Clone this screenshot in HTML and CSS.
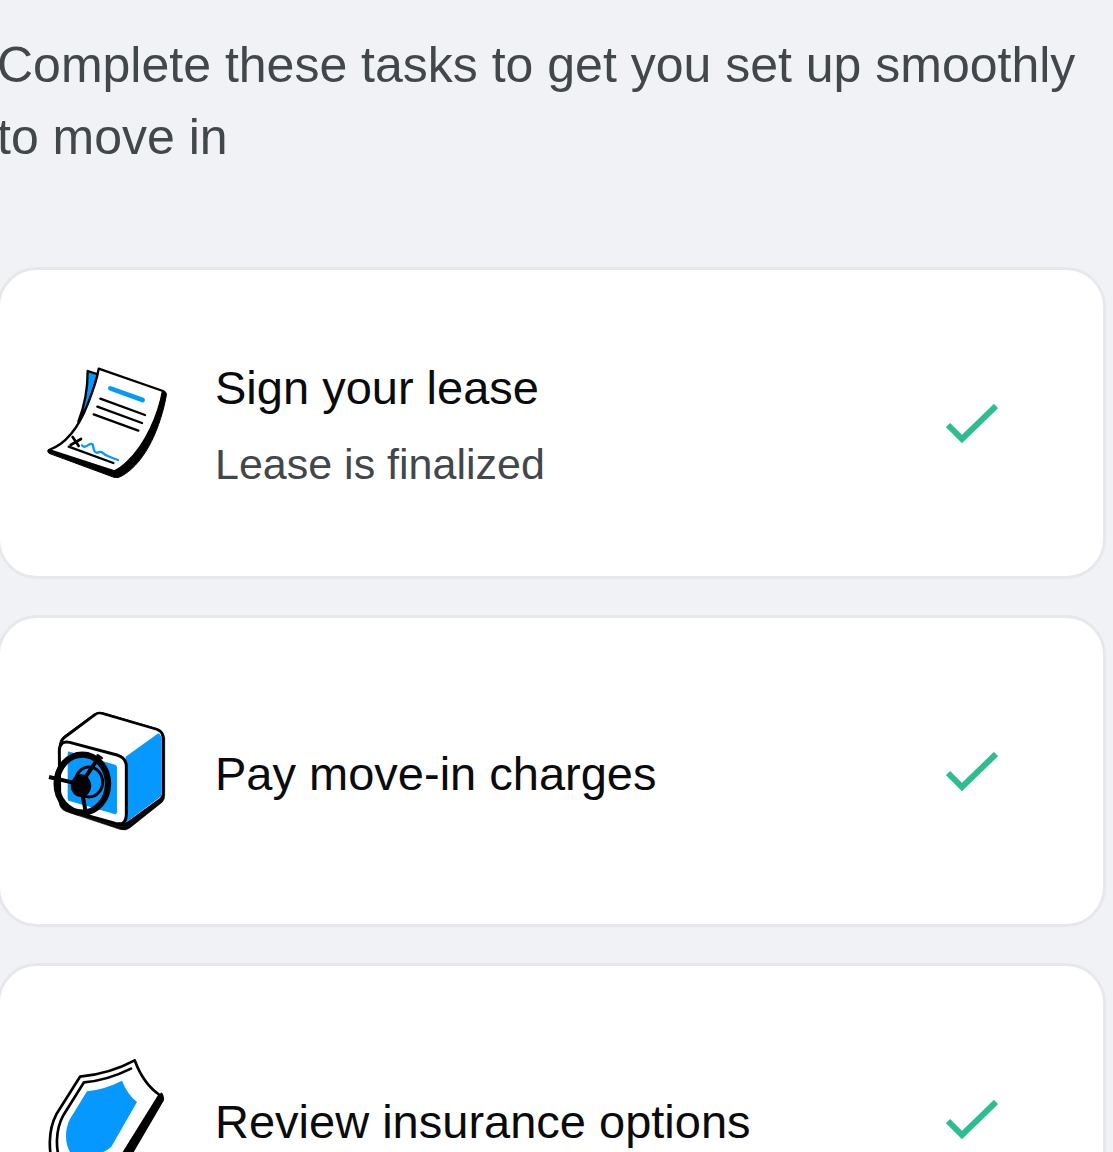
FILE: index.html
```html
<!DOCTYPE html>
<html lang="en">
<head>
<meta charset="utf-8">
<meta name="viewport" content="width=device-width, initial-scale=1">
<title>Move-in tasks</title>
<link rel="stylesheet" href="styles.css">
</head>
<body>
<main class="page">
  <p class="intro">Complete these tasks to get you set up smoothly to move in</p>
  <ul class="tasks">
    <li class="task">
      <svg class="task-icon" viewBox="36 21 360 372" aria-hidden="true" fill="none" stroke="#000" stroke-width="7" stroke-linejoin="round" stroke-linecap="round">
        <path d="M158 48L189 58L160 150L130 200Q158 130 158 48Z" fill="#0598ff"/>
        <path d="M388 108Q396 112 394 121C378 210 335 320 262 362Q248 371 237 367L42 295Q34 286 42 284L230 280Z" fill="#000" stroke-width="3"/>
        <path d="M191 41L384 108C372 175 335 268 276 322Q256 342 238 349L42 285C100 264 136 204 157 150C172 112 185 82 191 41Z" fill="#fff"/>
        <path d="M226 100L323 135" stroke="#0598ff" stroke-width="14"/>
        <path d="M196 131L330 180M187 155L321 204M176 178L310 227M101 275L235 324" stroke-width="7"/>
        <path d="M113 246L131 273M138 252L107 270" stroke-width="8"/>
        <path d="M141 271Q147 279 157 272Q171 262 174 271C176 280 175 291 184 293C193 294 193 287 201 292Q212 302 225 306L249 315" stroke="#0598ff" stroke-width="7"/>
      </svg>
      <div class="task-text">
        <h2 class="task-title">Sign your lease</h2>
        <p class="task-note">Lease is finalized</p>
      </div>
      <svg class="check" viewBox="0 0 52 40" role="img" aria-label="Complete"><path d="M2 21L16 35L50 2"/></svg>
    </li>
    <li class="task">
      <svg class="task-icon" viewBox="36 30 360 372" aria-hidden="true" fill="none" stroke="#000" stroke-width="8" stroke-linejoin="round" stroke-linecap="round">
        <path d="M73 150V310Q75 326 92 334L255 388Q272 393 284 384L382 306Q389 299 389 285V115Q386 93 369 87L205 38Q190 34 177 42L86 109Q71 121 73 150Z" fill="#000" stroke-width="2"/>
        <path d="M75 150Q74 123 89 112L180 44Q190 36 205 41L365 88Q384 95 384 114V281Q384 290 377 297L278 369L110 320L75 305Z" fill="#fff"/>
        <path d="M272 170L370 100Q379 105 380 117V278Q380 287 373 293L270 370Z" fill="#0598ff" stroke="none"/>
        <path d="M73 151Q76 120 104 127L246 165Q274 173 274 199V341Q274 378 242 370L107 333Q75 325 74 291Z" fill="#fff" stroke-width="9"/>
        <path d="M104 155L240 194Q246 196 246 203V337Q246 344 238 342L101 302Q98 301 98 296V161Q98 153 104 155Z" fill="#0598ff" stroke="none"/>
        <ellipse cx="142" cy="251" rx="77" ry="87" stroke-width="19"/>
        <ellipse cx="162" cy="246" rx="41" ry="45" stroke-width="9"/>
        <path d="M42 231L137 253L194 168M137 255L152 335" stroke-width="12" stroke-linecap="butt"/>
        <path d="M188 166L200 174" stroke-width="8"/>
        <ellipse cx="138" cy="257" rx="31" ry="34" fill="#000" stroke="none"/>
        <path d="M119 343L255 380Q270 384 281 376L382 300" stroke="#444" stroke-width="1"/>
      </svg>
      <div class="task-text">
        <h2 class="task-title">Pay move-in charges</h2>
      </div>
      <svg class="check" viewBox="0 0 52 40" role="img" aria-label="Complete"><path d="M2 21L16 35L50 2"/></svg>
    </li>
    <li class="task">
      <svg class="task-icon" viewBox="36 54 360 372" aria-hidden="true" fill="none" stroke="#000" stroke-width="8" stroke-linejoin="round" stroke-linecap="round">
        <path d="M379 160Q387 170 384 181L284 352Q225 420 130 414L262 340Z" fill="#000" stroke-width="5"/>
        <path d="M299 61Q225 101 135 110L64 223C38 272 40 340 58 384Q82 412 130 414Q220 405 262 345L374 165Q325 132 299 61Z" fill="#fff"/>
        <path d="M288 86Q215 122 147 127L86 224C59 272 62 332 78 370"/>
        <path d="M261 122Q210 148 156 154L105 237C86 275 92 315 105 336L125 352Q192 352 229 320L306 186Q278 165 261 122Z" fill="#0598ff" stroke="none"/>
      </svg>
      <div class="task-text">
        <h2 class="task-title">Review insurance options</h2>
      </div>
      <svg class="check" viewBox="0 0 52 40" role="img" aria-label="Complete"><path d="M2 21L16 35L50 2"/></svg>
    </li>
  </ul>
</main>
</body>
</html>
```
FILE: styles.css
```css
* {
  box-sizing: border-box;
}

body {
  height: 100vh;
  margin: 0;
  overflow: hidden;
  background: #f0f2f6;
  color: #0a0b0c;
  font-family: "Liberation Sans", Arial, sans-serif;
}

.page {
  margin: 0 7px 0 -3px;
  padding-top: 29px;
}

.intro {
  margin: 0 0 94px;
  color: #42474c;
  font-size: 50px;
  line-height: 72px;
}

.tasks {
  display: grid;
  gap: 36px;
  margin: 0;
  padding: 0;
  list-style: none;
}

.task {
  display: flex;
  align-items: center;
  gap: 48px;
  min-height: 312px;
  padding: 49px 105px 48px 47px;
  border: 3px solid #e6e8eb;
  border-radius: 40px;
  background: #fff;
}

.task-icon {
  flex: none;
  width: 120px;
  height: 124px;
}

.task-text {
  flex: 1;
  display: grid;
  gap: 12px;
  padding-top: 4px;
}

.task-title,
.task-note {
  margin: 0;
  font-weight: 400;
}

.task-title {
  font-size: 47px;
  line-height: 64px;
}

.task-note {
  color: #42474c;
  font-size: 43px;
  line-height: 64px;
}

.check {
  flex: none;
  width: 52px;
  height: 40px;
  fill: none;
  stroke: #2dbd90;
  stroke-width: 6;
}
```
